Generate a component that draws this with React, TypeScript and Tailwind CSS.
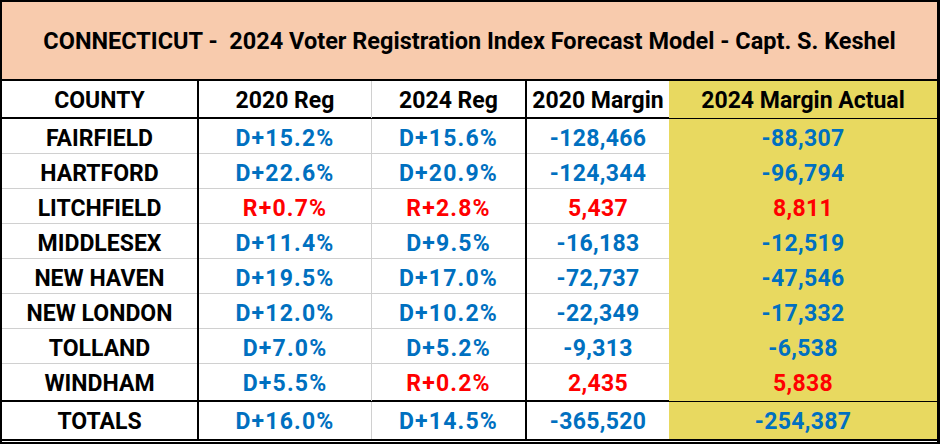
const rows = [
  { county: "FAIRFIELD", r20: "D+15.2%", r24: "D+15.6%", m20: "-128,466", m24: "-88,307" },
  { county: "HARTFORD", r20: "D+22.6%", r24: "D+20.9%", m20: "-124,344", m24: "-96,794" },
  { county: "LITCHFIELD", r20: "R+0.7%", r24: "R+2.8%", m20: "5,437", m24: "8,811" },
  { county: "MIDDLESEX", r20: "D+11.4%", r24: "D+9.5%", m20: "-16,183", m24: "-12,519" },
  { county: "NEW HAVEN", r20: "D+19.5%", r24: "D+17.0%", m20: "-72,737", m24: "-47,546" },
  { county: "NEW LONDON", r20: "D+12.0%", r24: "D+10.2%", m20: "-22,349", m24: "-17,332" },
  { county: "TOLLAND", r20: "D+7.0%", r24: "D+5.2%", m20: "-9,313", m24: "-6,538" },
  { county: "WINDHAM", r20: "D+5.5%", r24: "R+0.2%", m20: "2,435", m24: "5,838" },
]

// red for R+ / positive margins, blue otherwise
function tone(v: string) {
  return v.startsWith("R") || !v.startsWith("-") && !v.startsWith("D")
    ? "text-[#ff0000]"
    : "text-[#0070c0]"
}

const grid = "grid grid-cols-[197px_173px_155px_142px_1fr]"
const cell = "flex items-center justify-center pt-[3px]"

function Row({
  county,
  r20,
  r24,
  m20,
  m24,
  className,
}: {
  county: string
  r20: string
  r24: string
  m20: string
  m24: string
  className: string
}) {
  return (
    <div className={`${grid} ${className}`}>
      <div className={`${cell} border-r-2 border-black text-black`}>{county}</div>
      <div className={`${cell} border-r border-[#d0d0d0] tracking-[1.2px] ${tone(r20)}`}>{r20}</div>
      <div className={`${cell} border-r-2 border-black tracking-[1.2px] ${tone(r24)}`}>{r24}</div>
      <div className={`${cell} tracking-[0.3px] ${tone(m20)}`}>{m20}</div>
      <div className={`${cell} bg-[#e8d960] tracking-[0.3px] ${tone(m24)}`}>{m24}</div>
    </div>
  )
}

export default function App() {
  return (
    <div
      className="w-[940px] h-[446px] bg-white font-bold text-[23px]"
      style={{ fontFamily: "Roboto, 'Liberation Sans', sans-serif" }}
    >
      <div className="w-[940px] h-[444px] border-t-2 border-l-2 border-r-[3px] border-black flex flex-col">
        <div className="h-[79px] bg-[#f8cbad] border-b-2 border-black flex items-center justify-center text-[23.5px] text-black pt-[2px]">
          CONNECTICUT -&nbsp; 2024 Voter Registration Index Forecast Model - Capt. S. Keshel
        </div>
        <div className={`${grid} h-[38px] border-b-2 border-black text-black`}>
          <div className={`${cell} border-r-2 border-black`}>COUNTY</div>
          <div className={`${cell} border-r border-[#d0d0d0]`}>2020 Reg</div>
          <div className={`${cell} border-r-2 border-black`}>2024 Reg</div>
          <div className={cell}>2020 Margin</div>
          <div className={`${cell} bg-[#e8d960]`}>2024 Margin Actual</div>
        </div>
        <div className="flex flex-col border-b-2 border-black">
          {rows.map((r, i) => (
            <Row
              key={r.county}
              {...r}
              className={i === rows.length - 1 ? "h-[36px]" : "h-[35px] border-b border-[#d0d0d0]"}
            />
          ))}
        </div>
        <Row
          county="TOTALS"
          r20="D+16.0%"
          r24="D+14.5%"
          m20="-365,520"
          m24="-254,387"
          className="flex-1 border-b-[5px] border-double border-black"
        />
      </div>
    </div>
  )
}
